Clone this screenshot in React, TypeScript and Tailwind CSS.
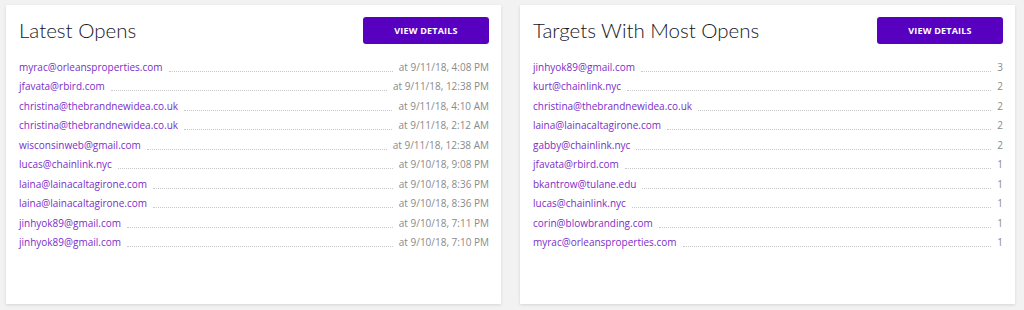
import React from "react";

const latest: [string, string][] = [
  ["myrac@orleansproperties.com", "at 9/11/18, 4:08 PM"],
  ["jfavata@rbird.com", "at 9/11/18, 12:38 PM"],
  ["christina@thebrandnewidea.co.uk", "at 9/11/18, 4:10 AM"],
  ["christina@thebrandnewidea.co.uk", "at 9/11/18, 2:12 AM"],
  ["wisconsinweb@gmail.com", "at 9/11/18, 12:38 AM"],
  ["lucas@chainlink.nyc", "at 9/10/18, 9:08 PM"],
  ["laina@lainacaltagirone.com", "at 9/10/18, 8:36 PM"],
  ["laina@lainacaltagirone.com", "at 9/10/18, 8:36 PM"],
  ["jinhyok89@gmail.com", "at 9/10/18, 7:11 PM"],
  ["jinhyok89@gmail.com", "at 9/10/18, 7:10 PM"],
];

const most: [string, string][] = [
  ["jinhyok89@gmail.com", "3"],
  ["kurt@chainlink.nyc", "2"],
  ["christina@thebrandnewidea.co.uk", "2"],
  ["laina@lainacaltagirone.com", "2"],
  ["gabby@chainlink.nyc", "2"],
  ["jfavata@rbird.com", "1"],
  ["bkantrow@tulane.edu", "1"],
  ["lucas@chainlink.nyc", "1"],
  ["corin@blowbranding.com", "1"],
  ["myrac@orleansproperties.com", "1"],
];

function Card({ title, rows }: { title: string; rows: [string, string][] }) {
  return (
    <div className="bg-white h-[299px] shadow-[0_1px_3px_rgba(0,0,0,0.12)] pl-[13px] pr-[12px] pt-[12px]">
      <div className="flex justify-between items-start h-[40px]">
        <h2 className="text-[20.5px] leading-none mt-[3px] text-[#15151f] font-light" style={{ fontFamily: "Lato, 'Noto Sans', sans-serif" }}>
          {title}
        </h2>
        <button className="w-[126px] h-[27px] bg-[#5800c0] rounded-[3px] text-white text-[9px] font-bold tracking-[0.2px]" style={{ fontFamily: "'Open Sans', sans-serif" }}>
          VIEW DETAILS
        </button>
      </div>
      <div className="flex flex-col" style={{ fontFamily: "'Open Sans', sans-serif" }}>
        {rows.map(([email, val], i) => (
          <div key={i} className="flex items-end h-[19.5px] text-[10px] leading-[19px]">
            <span className="text-[#7a2dc8] whitespace-nowrap">{email}</span>
            <span className="flex-1 border-b border-dotted border-[#c8c8c8] mx-[6px] mb-[5px]" />
            <span className="text-[#8a8a8a] whitespace-nowrap">{val}</span>
          </div>
        ))}
      </div>
    </div>
  );
}

export default function App() {
  return (
    <div className="w-[1024px] h-[310px] bg-[#f2f2f2] pt-[5px] pl-[6px] pr-[9px] grid grid-cols-2 gap-[19px] items-start">
      <Card title="Latest Opens" rows={latest} />
      <Card title="Targets With Most Opens" rows={most} />
    </div>
  );
}
